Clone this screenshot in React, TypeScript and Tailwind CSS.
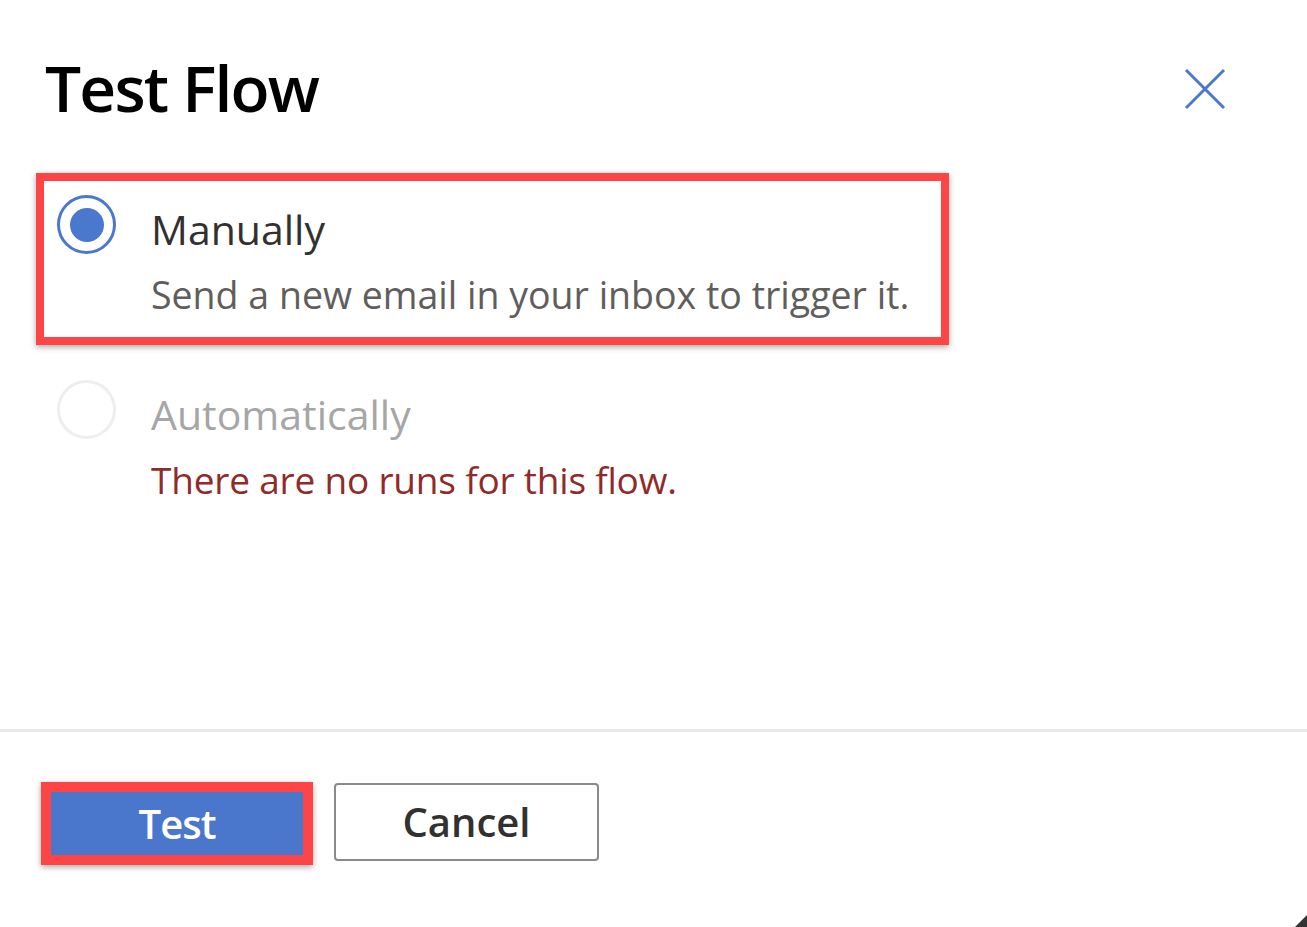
import React from "react";

export default function App() {
  return (
    <div
      className="w-[1307px] h-[927px] bg-white relative overflow-hidden flex flex-col"
      style={{ fontFamily: '"Open Sans", "Noto Sans", sans-serif' }}
    >
      <div className="flex items-start justify-between pl-[45px] pr-[80px] pt-[50px]">
        <h1 className="text-[64px] leading-[76px] font-semibold text-black tracking-[-1.8px]">Test Flow</h1>
        <button className="mt-[17px] w-[44px] h-[44px] flex items-center justify-center">
          <svg width="42" height="42" viewBox="0 0 42 42">
            <path d="M2 2 L40 40 M40 2 L2 40" stroke="#4a78cc" strokeWidth="3" fill="none" />
          </svg>
        </button>
      </div>

      <div className="pl-[36px] mt-[47px] flex flex-col">
        <div className="w-[913px] h-[172px] border-[8px] border-[#fe4545] shadow-[0_2px_6px_rgba(0,0,0,0.35)] flex pl-[13px] pt-[14px]">
          <div className="w-[59px] h-[59px] rounded-full border-[3px] border-[#4a78cc] flex items-center justify-center shrink-0">
            <div className="w-[34px] h-[34px] rounded-full bg-[#4a78cc]" />
          </div>
          <div className="ml-[35px] flex flex-col">
            <div className="text-[41px] leading-[56px] text-[#323130] mt-[6px]">Manually</div>
            <div className="text-[37.5px] leading-[56px] text-[#605e5c] mt-[10px]">
              Send a new email in your inbox to trigger it.
            </div>
          </div>
        </div>

        <div className="flex pl-[21px] pt-[35px]">
          <div className="w-[59px] h-[59px] rounded-full border-[3px] border-[#eeeeee] shrink-0" />
          <div className="ml-[35px] flex flex-col">
            <div className="text-[41px] leading-[56px] text-[#a6a6a6] mt-[6px]">Automatically</div>
            <div className="text-[37px] leading-[56px] text-[#8f2b2b] mt-[10px] tracking-[-0.2px]">
              There are no runs for this flow.
            </div>
          </div>
        </div>
      </div>

      <div className="mt-[221px] h-[3px] bg-[#e8e8e8] w-full" />

      <div className="flex pl-[41px] pt-[50px] gap-[21px] items-start">
        <button className="w-[272px] h-[83px] border-[10px] border-[#fe4545] bg-[#4a76cc] shadow-[0_2px_6px_rgba(0,0,0,0.35)] flex items-center justify-center">
          <span className="text-[40px] font-semibold text-white leading-none tracking-[-1px]">Test</span>
        </button>
        <button className="w-[265px] h-[78px] mt-[1px] border-[2px] border-[#8a8a8a] rounded-[4px] bg-white flex items-center justify-center">
          <span className="text-[40px] font-semibold text-[#323130] leading-none">Cancel</span>
        </button>
      </div>

      <div className="absolute right-0 bottom-0 w-0 h-0 border-l-[12px] border-l-transparent border-b-[12px] border-b-[#333333]" />
    </div>
  );
}
